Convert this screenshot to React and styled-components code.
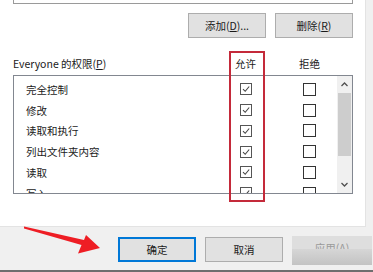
import React from 'react';
import styled, { createGlobalStyle } from 'styled-components';

const GlobalStyle = createGlobalStyle`
	html, body {
		margin: 0;
		padding: 0;
		background: #f0f0f0;
	}
	body {
		font-family: "Noto Sans CJK SC", "Noto Sans", sans-serif;
		font-size: 10.5px;
		color: #1a1a1a;
	}
`;

const Window = styled.div`
	position: relative;
	width: 373px;
	height: 272px;
	overflow: hidden;
	background: #f0f0f0;
	display: flex;
	flex-direction: column;
`;

const Page = styled.div`
	box-sizing: border-box;
	width: 366px;
	height: 227px;
	background: #fff;
	border-right: 1px solid #e3e3e3;
	border-bottom: 1px solid #e3e3e3;
	padding: 0 12px 0 13px;
	display: flex;
	flex-direction: column;
`;

const TopBoxEdge = styled.div`
	box-sizing: border-box;
	height: 4px;
	border: 1px solid #9a9a9a;
	border-top: none;
`;

const ButtonRow = styled.div`
	display: flex;
	justify-content: flex-end;
	gap: 9px;
	margin-top: 9px;
	padding-right: 0;
`;

const Button = styled.button`
	box-sizing: border-box;
	width: 78px;
	height: 25px;
	padding: 0;
	border: 1px solid ${(p) => (p.$primary ? '#0078d7' : '#adadad')};
	box-shadow: ${(p) => (p.$primary ? 'inset 0 0 0 1px #0078d7' : 'none')};
	background: #e1e1e1;
	font-family: inherit;
	font-size: 10.5px;
	color: #1a1a1a;
	position: relative;
	overflow: hidden;

	u {
		text-decoration: underline;
	}
`;

const DisabledButton = styled(Button)`
	width: 80px;
	height: 29px;
	margin-top: -1px;
	border: none;
	background: #dedede;
	color: #9a9a9a;
	padding-bottom: 6px;

	&::after {
		content: '';
		position: absolute;
		left: 0;
		right: 0;
		bottom: 0;
		height: 55%;
		background: linear-gradient(#d6d6d6, #c3c3c3);
	}
`;

const HeaderRow = styled.div`
	display: grid;
	grid-template-columns: 216px 33px 30px 35px 1fr;
	height: 16px;
	line-height: 16px;
	margin-top: 18px;
`;

const ColHead = styled.span`
	text-align: center;
`;

const ListBox = styled.div`
	box-sizing: border-box;
	margin-top: 3px;
	height: 119px;
	border: 1px solid #828790;
	display: flex;
	overflow: hidden;
`;

const Rows = styled.div`
	flex: 1;
	padding-top: 3px;
	overflow: hidden;
`;

const Row = styled.div`
	display: grid;
	grid-template-columns: 215px 33px 30px 35px 1fr;
	align-items: center;
	height: 20.75px;
`;

const RowLabel = styled.span`
	padding-left: 12px;
`;

const Cell = styled.span`
	display: flex;
	justify-content: center;
`;

const Box = styled.span`
	box-sizing: border-box;
	width: ${(p) => (p.$checked ? 12 : 13)}px;
	height: ${(p) => (p.$checked ? 12 : 13)}px;
	border: 1px solid ${(p) => (p.$checked ? '#555' : '#333')};
	background: #fff;
	display: flex;
	align-items: center;
	justify-content: center;
`;

const Scrollbar = styled.div`
	width: 15px;
	background: #f0f0f0;
	display: flex;
	flex-direction: column;
	align-items: center;
`;

const Arrow = styled.div`
	height: 17px;
	display: flex;
	align-items: center;
	justify-content: center;
`;

const Thumb = styled.div`
	width: 13px;
	height: 63px;
	background: #cdcdcd;
`;

const Track = styled.div`
	flex: 1;
`;

const Footer = styled.div`
	display: flex;
	gap: 9px;
	padding: 10px 0 0 118px;
	height: 33px;
`;

const BottomEdge = styled.div`
	height: 2px;
	margin-top: auto;
	background: #6e6e6e;
`;

const Highlight = styled.div`
	position: absolute;
	left: 229px;
	top: 51px;
	width: 36px;
	height: 151px;
	box-sizing: border-box;
	border: 2px solid #c42a3a;
	pointer-events: none;
`;

const Pointer = styled.svg`
	position: absolute;
	left: 0;
	top: 0;
	pointer-events: none;
`;

const permissions = ['完全控制', '修改', '读取和执行', '列出文件夹内容', '读取', '写入'];

const Check = () => (
	<svg width="8" height="8" viewBox="0 0 8 8">
		<path d="M1 4.2 L3.2 6.3 L7.2 1.5" fill="none" stroke="#444" strokeWidth="1.1" />
	</svg>
);

const Chevron = ({ up }) => (
	<svg width="7" height="5" viewBox="0 0 7 5">
		<path
			d={up ? 'M0.5 4 L3.5 1 L6.5 4' : 'M0.5 1 L3.5 4 L6.5 1'}
			fill="none"
			stroke="#505050"
			strokeWidth="1.3"
		/>
	</svg>
);

const App = () => (
	<>
		<GlobalStyle />
		<Window>
			<Page>
				<TopBoxEdge />
				<ButtonRow>
					<Button>添加(<u>D</u>)...</Button>
					<Button>删除(<u>R</u>)</Button>
				</ButtonRow>
				<HeaderRow>
					<span>Everyone 的权限(<u>P</u>)</span>
					<ColHead>允许</ColHead>
					<span />
					<ColHead>拒绝</ColHead>
				</HeaderRow>
				<ListBox>
					<Rows>
						{permissions.map((name) => (
							<Row key={name}>
								<RowLabel>{name}</RowLabel>
								<Cell>
									<Box $checked>
										<Check />
									</Box>
								</Cell>
								<span />
								<Cell>
									<Box />
								</Cell>
							</Row>
						))}
					</Rows>
					<Scrollbar>
						<Arrow><Chevron up /></Arrow>
						<Thumb />
						<Track />
						<Arrow><Chevron /></Arrow>
					</Scrollbar>
				</ListBox>
			</Page>
			<Footer>
				<Button $primary>确定</Button>
				<Button>取消</Button>
				<DisabledButton>应用(A)</DisabledButton>
			</Footer>
			<BottomEdge />
			<Highlight />
			<Pointer width="373" height="272" viewBox="0 0 373 272">
				<polygon
					points="24,226.5 84,240 86,235 100,248 78,253.5 81.5,245 24,228.5"
					fill="#ee1d24"
				/>
			</Pointer>
		</Window>
	</>
);

export default App;
